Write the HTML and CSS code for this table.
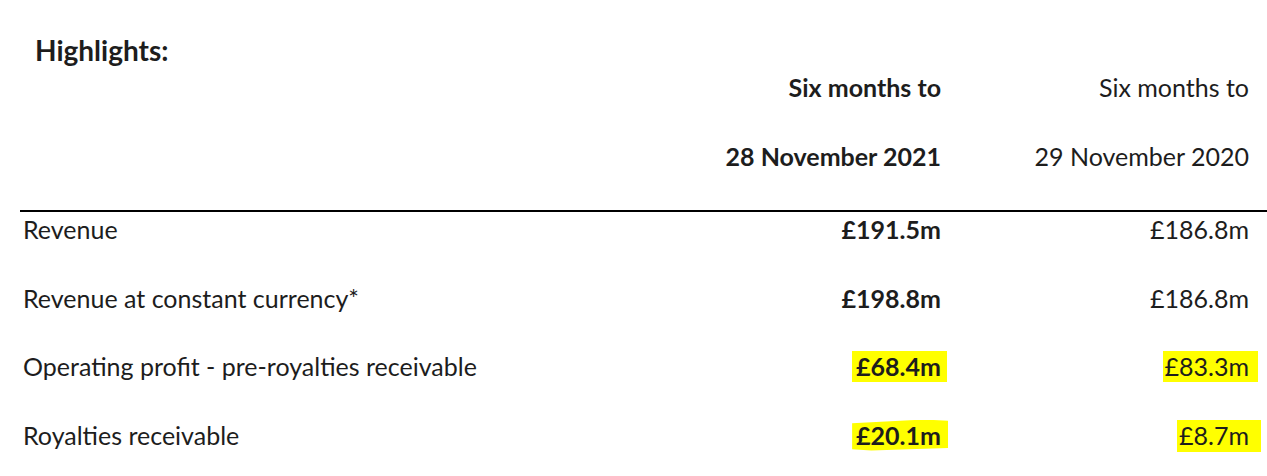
FILE: index.html
```html
<!DOCTYPE html>
<html lang="en">
<head>
<meta charset="utf-8">
<title>Highlights</title>
<link rel="stylesheet" href="styles.css">
</head>
<body>
<div class="page">
  <h1 class="title">Highlights:</h1>
  <div class="grid head">
    <div></div>
    <div class="num bold">Six months to</div>
    <div class="num">Six months to</div>
    <div></div>
    <div class="num bold">28 November 2021</div>
    <div class="num">29 November 2020</div>
  </div>
  <div class="rule"></div>
  <div class="grid body">
    <div class="label">Revenue</div>
    <div class="num bold">£191.5m</div>
    <div class="num">£186.8m</div>

    <div class="label">Revenue at constant currency*</div>
    <div class="num bold">£198.8m</div>
    <div class="num">£186.8m</div>

    <div class="label">Operating profit - pre-royalties receivable</div>
    <div class="num bold"><span class="hl hl-a">£68.4m</span></div>
    <div class="num"><span class="hl hl-b">£83.3m</span></div>

    <div class="label">Royalties receivable</div>
    <div class="num bold"><span class="hl hl-c">£20.1m</span></div>
    <div class="num"><span class="hl hl-d">£8.7m</span></div>
  </div>
</div>
</body>
</html>
```
FILE: styles.css
```css
html, body {
  margin: 0;
  background: #ffffff;
}

body {
  font-family: Lato, "Liberation Sans", sans-serif;
  color: #1d1d1d;
  font-size: 25px;
}

.page {
  width: 1267px;
  height: 476px;
  overflow: hidden;
}

.title {
  margin: 0;
  padding: 33px 0 0 35px;
  font-size: 28px;
  font-weight: 700;
  line-height: 34px;
}

.grid {
  display: grid;
  grid-template-columns: 1fr 300px 308px;
  padding: 0 18px 0 23px;
  line-height: 34px;
}

.head {
  margin-top: 3px;
  row-gap: 35px;
}

.body {
  row-gap: 34.5px;
}

.num {
  text-align: right;
  white-space: nowrap;
}

.bold {
  font-weight: 700;
}

.label {
  white-space: nowrap;
}

.rule {
  margin: 37px 0 0 20px;
  height: 2px;
  background: #000000;
}

.hl {
  background: #ffff00;
  padding-top: 0;
  padding-bottom: 1px;
}

.hl-a {
  padding-left: 4px;
  padding-right: 6px;
  margin-right: -6px;
}

.hl-b {
  padding-left: 2px;
  padding-right: 9px;
  margin-right: -9px;
}

.hl-c {
  padding-left: 4px;
  padding-right: 7px;
  margin-right: -7px;
  clip-path: polygon(0 12%, 40% 6%, 75% 0, 100% 4%, 100% 92%, 60% 96%, 20% 100%, 0 96%);
}

.hl-d {
  padding-left: 2px;
  padding-right: 12px;
  margin-right: -12px;
  padding-bottom: 2px;
}
```
